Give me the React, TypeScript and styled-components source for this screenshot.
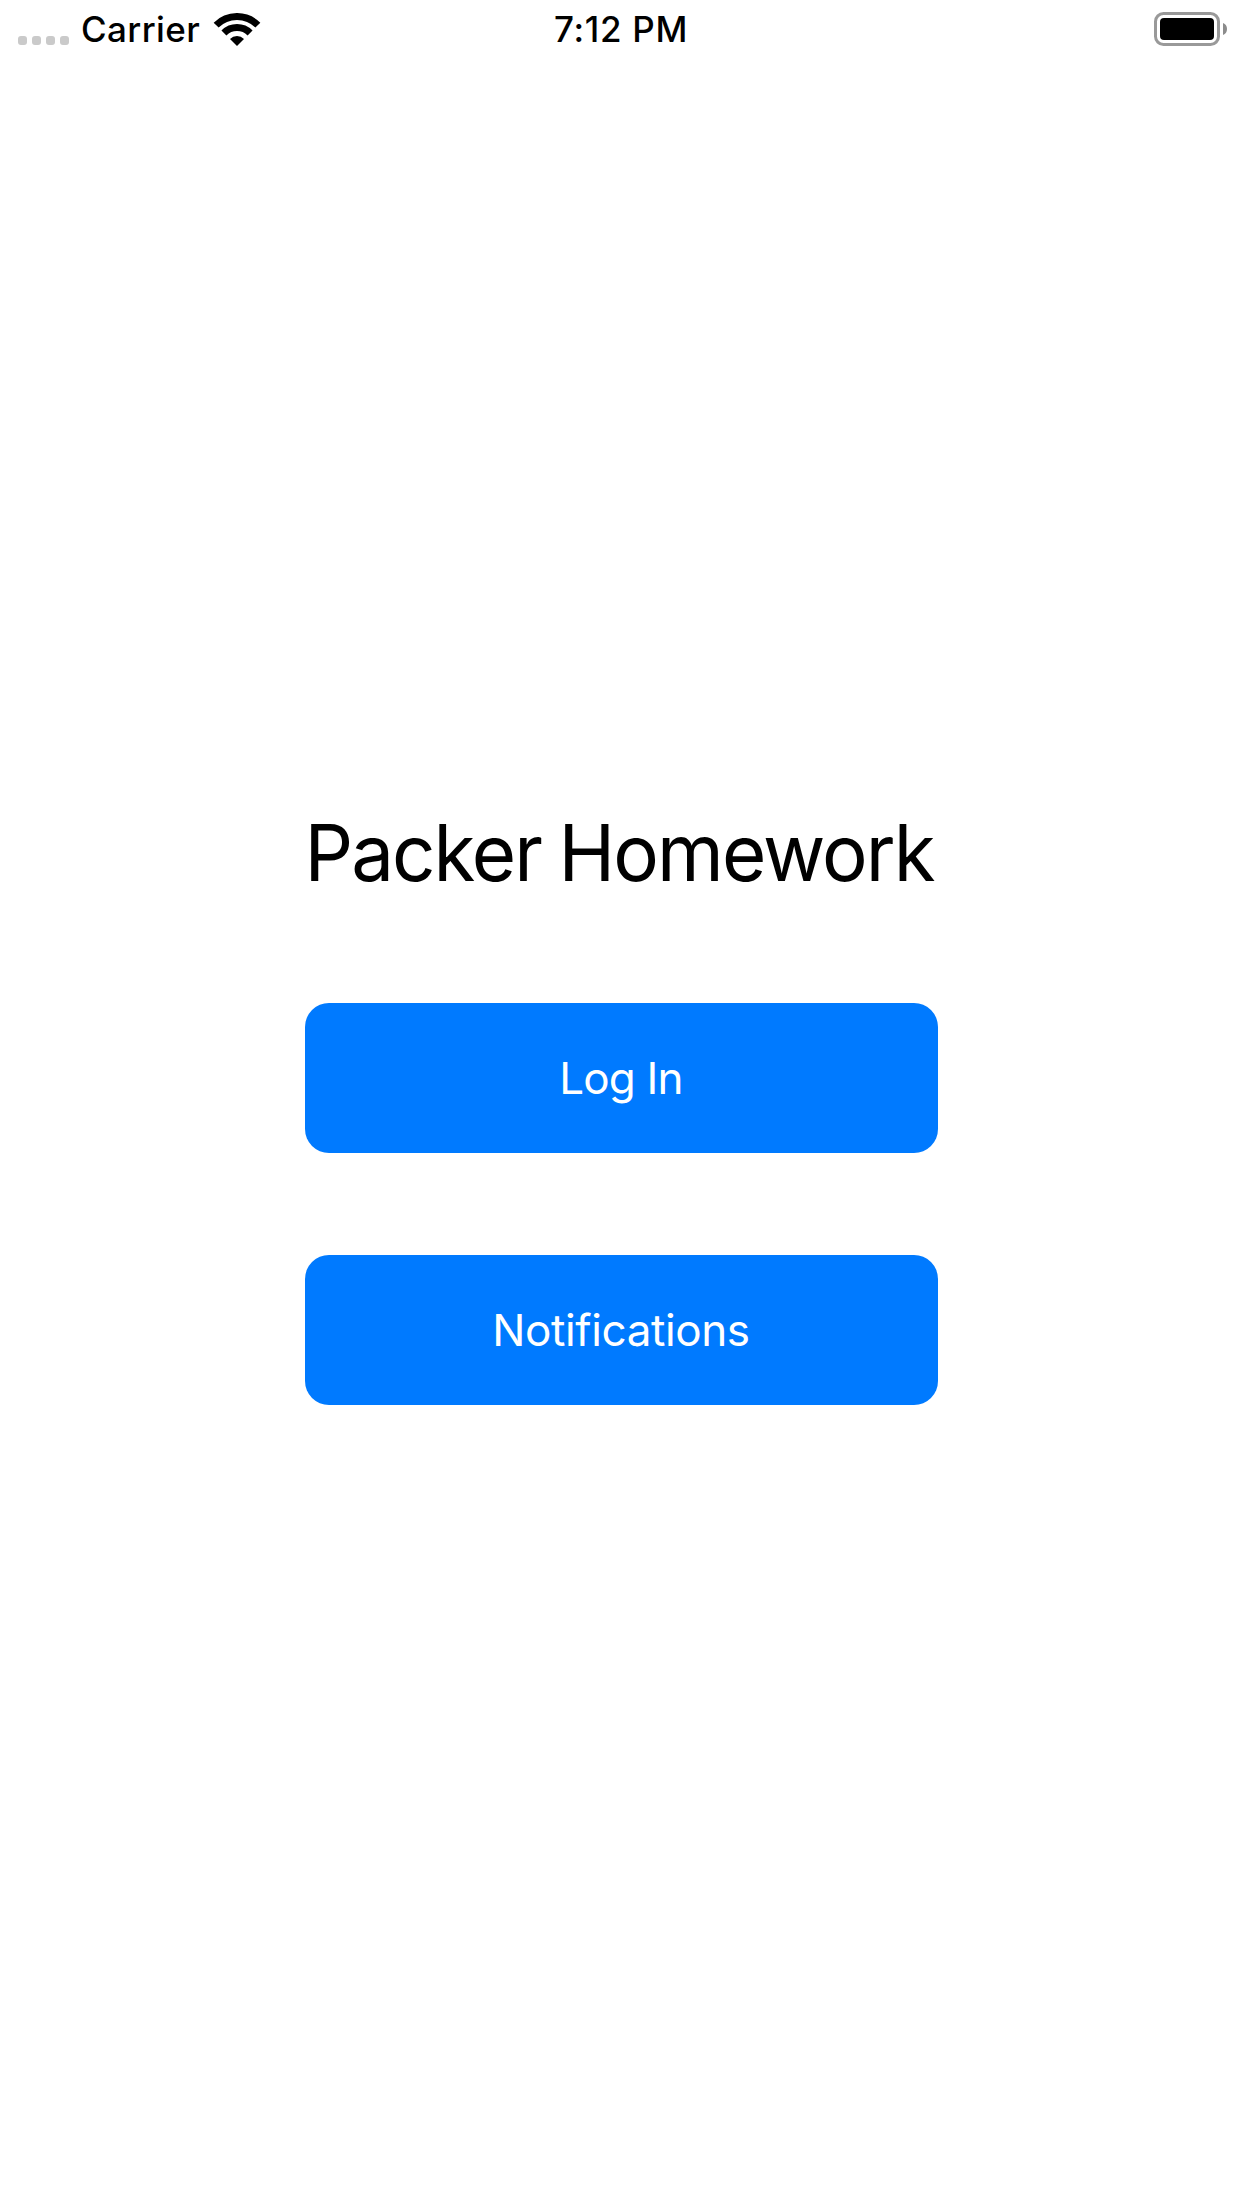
import React from "react";
import styled, { createGlobalStyle } from "styled-components";

const GlobalStyle = createGlobalStyle`
  *, *::before, *::after { box-sizing: border-box; }
  body {
    margin: 0;
    background: #fff;
    color: #000;
    font-family: Inter, "Liberation Sans", sans-serif;
  }
`;

const Screen = styled.div`
  display: flex;
  flex-direction: column;
  width: 1242px;
  height: 2208px;
  background: #fff;
  overflow: hidden;
`;

const StatusBar = styled.header`
  display: grid;
  grid-template-columns: 1fr auto 1fr;
  align-items: center;
  height: 60px;
  padding: 0 15px 2px 18px;
`;

const StatusText = styled.span<{ $spacing: number }>`
  font-size: 35px;
  font-weight: 500;
  line-height: 58px;
  letter-spacing: ${({ $spacing }) => $spacing}px;
  white-space: pre;
`;

const Clock = styled(StatusText)`
  margin-right: 3px;
`;

const Network = styled.div`
  display: flex;
  align-items: center;
`;

const Signal = styled.div`
  display: flex;
  gap: 5px;
  margin: 23px 12px 0 0;
`;

const Dot = styled.span`
  width: 9px;
  height: 9px;
  border-radius: 3px;
  background: #cacaca;
`;

const WifiIcon = styled.svg`
  width: 48px;
  height: 34px;
  margin: 2px 0 0 13px;
`;

const BatteryIcon = styled.svg`
  width: 73px;
  height: 34px;
  justify-self: end;
`;

const Content = styled.main`
  display: flex;
  flex-direction: column;
  align-items: center;
  padding-top: 744px;
`;

const Title = styled.h1`
  margin: 0 4px 101px 0;
  font-size: 78.5px;
  font-weight: 400;
  line-height: 98px;
  letter-spacing: -2px;
  word-spacing: -2px;
  white-space: nowrap;
  transform: scaleX(0.971);
`;

const Actions = styled.div`
  display: flex;
  flex-direction: column;
  gap: 102px;
`;

const Button = styled.button<{ $spacing: number }>`
  width: 633px;
  height: 150px;
  padding: 0;
  border: 0;
  border-radius: 24px;
  background: #007aff;
  color: #fff;
  font-family: inherit;
  font-size: 44px;
  font-weight: 400;
  line-height: 54px;
  letter-spacing: ${({ $spacing }) => $spacing}px;
`;

export default function App() {
  return (
    <>
      <GlobalStyle />
      <Screen>
        <StatusBar>
          <Network>
            <Signal>
              <Dot />
              <Dot />
              <Dot />
              <Dot />
            </Signal>
            <StatusText $spacing={0.4}>Carrier</StatusText>
            <WifiIcon viewBox="0 0 48 34" fill="none" stroke="#000">
              <path d="M3.14 12.14A29.5 29.5 0 0 1 44.86 12.14" strokeWidth="7" />
              <path d="M10.92 19.92A18.5 18.5 0 0 1 37.08 19.92" strokeWidth="7" />
              <path d="M24 33L17 26A9.9 9.9 0 0 1 31 26Z" fill="#000" stroke="none" />
            </WifiIcon>
          </Network>
          <Clock $spacing={0.7}>7:12 PM</Clock>
          <BatteryIcon viewBox="0 0 73 34">
            <rect x="1.5" y="1.5" width="63" height="31" rx="8" fill="none" stroke="#999" strokeWidth="3" />
            <rect x="6" y="6" width="54" height="22" rx="4" fill="#000" />
            <path d="M69 11Q73 12.5 73 17T69 23Z" fill="#8c8c8c" />
          </BatteryIcon>
        </StatusBar>
        <Content>
          <Title>Packer Homework</Title>
          <Actions>
            <Button $spacing={-0.8}>Log In</Button>
            <Button $spacing={-0.4}>Notifications</Button>
          </Actions>
        </Content>
      </Screen>
    </>
  );
}
